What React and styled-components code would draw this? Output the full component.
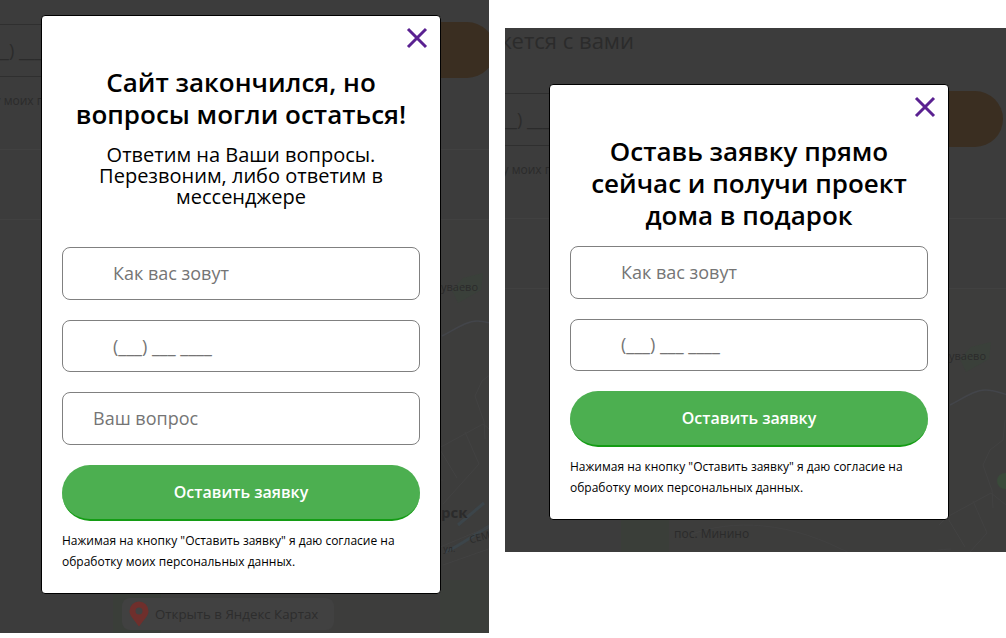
import React from "react";
import styled, { createGlobalStyle } from "styled-components";

const Global = createGlobalStyle`
  html, body { margin: 0; padding: 0; background: #fff; }
  * { box-sizing: border-box; }
  body { font-family: "Open Sans", "Noto Sans", sans-serif; }
`;

const Page = styled.div`
  width: 1006px;
  height: 638px;
  display: flex;
  align-items: flex-start;
  gap: 16px;
  overflow: hidden;
`;

const Screen = styled.section`
  position: relative;
  flex: none;
  display: flex;
  align-items: flex-start;
  overflow: hidden;
  background: #3c3c3c;
  width: ${p => p.$w}px;
  height: ${p => p.$h}px;
  margin-top: ${p => p.$top}px;
  padding: ${p => p.$py}px 0 0 ${p => p.$px}px;
`;

/* The dimmed site that lies under the popup's overlay */
const Backdrop = styled.div`
  position: absolute;
  left: ${p => p.$x}px;
  top: ${p => p.$y}px;
  width: 560px;
  display: flex;
  flex-direction: column;
  color: #2b2b2b;
`;

const GhostHeading = styled.div`
  height: 66px;
  width: 186px;
  text-align: right;
  font-size: 22px;
  line-height: 30px;
  white-space: nowrap;
  direction: rtl;
`;

const GhostRow = styled.div`
  display: flex;
  align-items: center;
  height: 56px;
`;

const GhostInput = styled.div`
  flex: none;
  width: 480px;
  height: 53px;
  border: 1px solid #2f2f2f;
  border-right: 0;
  border-radius: 8px 0 0 8px;
  padding: 12px 0 0 39px;
  font-size: 18px;
  line-height: 26px;
  white-space: nowrap;
`;

const GhostButton = styled.div`
  flex: none;
  width: 75px;
  height: 56px;
  border-radius: 0 28px 28px 0;
  background: #3a2e21;
`;

const GhostConsent = styled.div`
  margin-top: 12px;
  font-size: 12px;
  line-height: 21px;
  white-space: nowrap;
`;

const GhostRule = styled.div`
  height: 1px;
  margin-top: ${p => p.$gap}px;
  background: #414141;
`;

const MapArea = styled.div`
  position: relative;
  margin-left: 173px;
  width: 387px;
  height: 420px;
  background: #3d3d3c;
`;

const MapDrawing = styled.svg`
  display: block;
  width: 100%;
  height: 100%;
`;

const MapLabel = styled.span`
  position: absolute;
  left: ${p => p.$x}px;
  top: ${p => p.$y}px;
  font-size: ${p => p.$size || 12}px;
  font-weight: ${p => p.$weight || 400};
  line-height: 16px;
  color: #2b2b2b;
  white-space: nowrap;
  transform: rotate(${p => p.$rot || 0}deg);
`;

const MapsLink = styled.div`
  position: absolute;
  left: 9px;
  top: 378px;
  width: 212px;
  height: 32px;
  border-radius: 8px;
  background: #414141;
  display: flex;
  align-items: center;
  gap: 6px;
  padding-left: 7px;
  font-size: 13.3px;
  color: #2d2d2d;
  white-space: nowrap;
`;

const Modal = styled.div`
  position: relative;
  flex: none;
  width: 400px;
  background: #fff;
  border: 1px solid #000;
  border-radius: 4px;
  padding: ${p => p.$pt}px 20px 0;
  height: ${p => p.$h}px;
`;

const CloseButton = styled.button`
  position: absolute;
  top: 11px;
  right: 12px;
  width: 22px;
  height: 22px;
  padding: 0;
  border: 0;
  background: none;
  display: block;
  svg { display: block; }
`;

const Title = styled.h2`
  margin: 0;
  font-size: 26px;
  line-height: 32px;
  font-weight: 600;
  color: #000;
  text-align: center;
`;

const Subtitle = styled.p`
  margin: 15px 0 0;
  font-size: 20px;
  line-height: 20.8px;
  font-weight: 400;
  color: #000;
  text-align: center;
`;

const Form = styled.form`
  display: flex;
  flex-direction: column;
  gap: 20px;
  margin-top: ${p => p.$mt}px;
`;

const Field = styled.input`
  display: block;
  width: 100%;
  height: 52.5px;
  border: 1px solid #808080;
  border-radius: 8px;
  background: #fff;
  outline: none;
  padding: 0 0 1px ${p => p.$indent}px;
  font-family: inherit;
  font-size: 18px;
  color: #333;
  &::placeholder { color: #757575; opacity: 1; }
`;

const Submit = styled.button`
  display: block;
  width: 100%;
  height: 56px;
  border: 0;
  border-bottom: 2px solid #149c14;
  border-radius: 28px;
  background: #4caf50;
  color: #fff;
  font-family: inherit;
  font-size: 16px;
  font-weight: 600;
`;

const Consent = styled.p`
  margin: 9px 0 0;
  font-size: 12px;
  line-height: 21px;
  color: #000;
`;

const CloseIcon = () => (
  <svg width="22" height="22" viewBox="0 0 22 22" fill="none">
    <path d="M2 2 L20 20 M20 2 L2 20" stroke="#5a2191" strokeWidth="3" />
  </svg>
);

const Pin = () => (
  <svg width="20" height="26" viewBox="0 0 20 26">
    <path d="M10 0.5a9.5 9.5 0 0 0-9.5 9.5c0 5 4 8 9.5 15.5C15.5 18 19.5 15 19.5 10A9.5 9.5 0 0 0 10 0.5z" fill="#6f2f2c" />
    <circle cx="10" cy="10" r="3.5" fill="#414141" />
  </svg>
);

const MapArt = () => (
  <MapDrawing viewBox="0 0 387 420" fill="none">
    <path d="M0 231H48V420H0z" fill="#3a3e39" />
    <path d="M327 360H387V420H327z" fill="#3b3e3a" />
    <path d="M370 53l-2 17-23 13-6-13 11-12z" fill="#3a403a" />
    <path d="M329 116c15-8 25-15 35-15s15 3 23 5" stroke="#43454a" strokeWidth="1.5" />
    <path d="M384 131l-2 20-13 10-7 15 7 20 2 5 1 18" stroke="#424242" strokeWidth="1" />
    <circle cx="384" cy="192" r="8" fill="#3a4a3a" />
    <path d="M370 204l-44 24-8 8M370 204l20 16M326 228l18 30M352 212l14 32-36 40" stroke="#424242" strokeWidth="1" />
    <path d="M387 302c-15 3-35 22-55 30M345 305l26-22" stroke="#3c454a" strokeWidth="3" />
    <path d="M320 330l67-28M330 345l57-20" stroke="#424242" strokeWidth="1" />
    <path d="M60 250c40-20 100-20 160 10s70 0 110 0" stroke="#414141" strokeWidth="1" />
  </MapDrawing>
);

const PageBehind = ({ x, y }) => (
  <Backdrop $x={x - 60} $y={y - 44}>
    <GhostHeading>Наш менеджер свяжется с вами</GhostHeading>
    <GhostRow>
      <GhostInput>(___) ___ ____</GhostInput>
      <GhostButton />
    </GhostRow>
    <GhostConsent>обработку моих персональных данных.</GhostConsent>
    <GhostRule $gap={38} />
    <GhostRule $gap={69} />
    <MapArea>
      <MapArt />
      <MapLabel $x={328} $y={59} $size={11}>уваево</MapLabel>
      <MapLabel $x={328} $y={284} $size={15} $weight={700}>рск</MapLabel>
      <MapLabel $x={356} $y={308} $size={10} $rot={-15}>СЕМА</MapLabel>
      <MapLabel $x={318} $y={321} $size={9}>ая ул.</MapLabel>
      <MapLabel $x={53} $y={237} $size={12}>пос. Минино</MapLabel>
      <MapsLink><Pin />Открыть в Яндекс Картах</MapsLink>
    </MapArea>
  </Backdrop>
);

const Popup = ({ pt, h, title, subtitle, formTop, question }) => (
  <Modal $pt={pt} $h={h}>
    <CloseButton type="button" aria-label="Закрыть"><CloseIcon /></CloseButton>
    <Title>{title}</Title>
    {subtitle && <Subtitle>{subtitle}</Subtitle>}
    <Form $mt={formTop}>
      <Field $indent={50} placeholder="Как вас зовут" />
      <Field $indent={50} placeholder="(___) ___ ____" />
      {question && <Field $indent={30} placeholder="Ваш вопрос" />}
      <Submit type="button">Оставить заявку</Submit>
    </Form>
    <Consent>Нажимая на кнопку "Оставить заявку" я даю согласие на обработку моих персональных данных.</Consent>
  </Modal>
);

export default function App() {
  return (
    <Page>
      <Global />
      <Screen $w={489} $h={633} $top={0} $px={41} $py={15}>
        <PageBehind x={0} y={0} />
        <Popup
          pt={50}
          h={579}
          formTop={40}
          question
          title={<>Сайт закончился, но<br />вопросы могли остаться!</>}
          subtitle={<>Ответим на Ваши вопросы.<br />Перезвоним, либо ответим в<br />мессенджере</>}
        />
      </Screen>
      <Screen $w={501} $h={524} $top={28} $px={44} $py={56}>
        <PageBehind x={3} y={41} />
        <Popup
          pt={50}
          h={436}
          formTop={15}
          title={<>Оставь заявку прямо<br />сейчас и получи проект<br />дома в подарок</>}
        />
      </Screen>
    </Page>
  );
}
